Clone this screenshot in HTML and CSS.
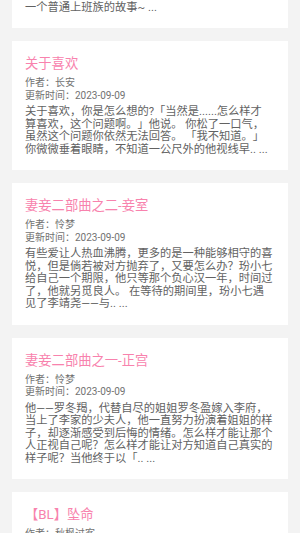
FILE: index.html
```html
<!DOCTYPE html>
<html lang="zh-CN">
<head>
  <meta charset="UTF-8">
  <meta name="viewport" content="width=device-width, initial-scale=1.0">
  <title>小说列表</title>
  <link rel="stylesheet" href="styles.css">
</head>
<body>
  <div class="book-list">
    <div class="book-card">
      <p class="book-desc">一个普通上班族的故事~ ...</p>
    </div>

    <div class="book-card">
      <h3 class="book-title">关于喜欢</h3>
      <div class="book-meta">作者：长安</div>
      <div class="book-meta">更新时间：2023-09-09</div>
      <p class="book-desc">关于喜欢，你是怎么想的?「当然是......怎么样才算喜欢，这个问题啊。」他说。 你松了一口气，虽然这个问题你依然无法回答。 「我不知道。」你微微垂着眼睛，不知道一公尺外的他视线早.. ...</p>
    </div>

    <div class="book-card">
      <h3 class="book-title">妻妾二部曲之二-妾室</h3>
      <div class="book-meta">作者：怜梦</div>
      <div class="book-meta">更新时间：2023-09-09</div>
      <p class="book-desc">有些爱让人热血沸腾，更多的是一种能够相守的喜悦，但是倘若被对方抛弃了，又要怎么办？玢小七给自己一个期限，他只等那个负心汉一年，时间过了，他就另觅良人。 在等待的期间里，玢小七遇见了李靖尧——与.. ...</p>
    </div>

    <div class="book-card">
      <h3 class="book-title">妻妾二部曲之一-正宫</h3>
      <div class="book-meta">作者：怜梦</div>
      <div class="book-meta">更新时间：2023-09-09</div>
      <p class="book-desc">他——罗冬羯，代替自尽的姐姐罗冬盈嫁入李府，当上了李家的少夫人，他一直努力扮演着姐姐的样子，却逐渐感受到后悔的情绪。怎么样才能让那个人正视自己呢？怎么样才能让对方知道自己真实的样子呢？当他终于以「.. ...</p>
    </div>

    <div class="book-card">
      <h3 class="book-title">【BL】坠命</h3>
      <div class="book-meta">作者：秋枫过客</div>
      <div class="book-meta">更新时间：2023-09-09</div>
    </div>
  </div>
</body>
</html>
```

FILE: styles.css
```css
:root {
	--page-bg: #f3f3f3;
	--title-color: #f882ad;
	--meta-color: #727272;
	--desc-color: #626262;
}

body {
	margin: 0;
	background-color: var(--page-bg);
	font-family: Roboto, "Noto Sans CJK SC", sans-serif;
	text-spacing-trim: space-all;
	overflow: hidden;
}

/* list is scrolled a little, first card is cut at the top */
.book-list {
	display: flex;
	flex-direction: column;
	gap: 13px;
	padding: 0 12px;
	margin-top: -11.5px;
}

.book-card {
	background: #fff;
	padding: 13px 15.4px 14px 13px;
}

.book-title {
	margin: 0;
	font-size: 13.3px;
	font-weight: 400;
	line-height: 20px;
	color: var(--title-color);
}

.book-meta {
	font-size: 10px;
	line-height: 12.5px;
	color: var(--meta-color);
}

.book-title + .book-meta {
	margin-top: 3px;
}

.book-desc {
	margin: 4px 0 0;
	font-size: 11.25px;
	line-height: 12.5px;
	color: var(--desc-color);
}

.book-card:first-child .book-desc {
	margin-top: 0;
}
```
